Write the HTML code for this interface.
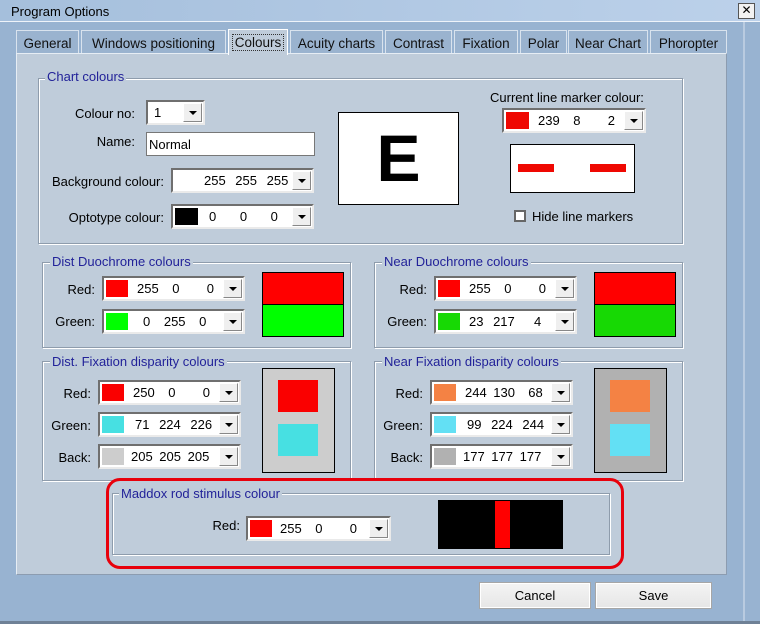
<!DOCTYPE html>
<html><head><meta charset="utf-8"><style>
*{margin:0;padding:0;box-sizing:border-box}
body{width:760px;height:624px;background:#98b3d1;font-family:"Liberation Sans",sans-serif;font-size:13px;color:#000;position:relative;overflow:hidden}
.a{position:absolute}
.title{left:0;top:0;width:760px;height:22px;background:linear-gradient(90deg,#a5bfdc,#bcd1ea);border-bottom:1px solid #eef3f9}
.tab{position:absolute;top:30px;height:24px;background:#9ab3cf;border:1px solid #d9e3ee;border-bottom:none;padding:5px 0 0;text-align:center;font-size:13.5px;color:#111}
.tab.act{top:29px;height:26px;background:#bfccda;z-index:2;border-color:#fff}
.tab.act span{border:1px dotted #333;padding:0 2px}
.panel{left:16px;top:53px;width:711px;height:522px;background:#bfccda;border:1px solid #e6edf4;border-right-color:#8c9cb0;border-bottom-color:#8c9cb0}
.grp{position:absolute;border:1px solid #8e9cac;box-shadow:1px 1px 0 #fff, inset 1px 1px 0 #fff}
.lg{position:absolute;background:#bfccda;color:#222299;padding:0 2px;font-size:13px;line-height:14px}
.lbl{position:absolute;font-size:13px;text-align:right;line-height:16px}
.cb{position:absolute;height:25px;background:#fff;border:2px solid;border-color:#6f6f6f #eaeaea #eaeaea #6f6f6f;font-size:13px}
.cb .sw{position:absolute;left:2px;top:2px;width:22px;height:17px}
.cb .bt{position:absolute;right:1px;top:1px;width:19px;height:19px;background:#efefef;border:1px solid;border-color:#fff #888 #888 #fff}
.cb .bt:after{content:"";position:absolute;left:5px;top:7px;border-left:4px solid transparent;border-right:4px solid transparent;border-top:4px solid #000}
.cb .v{position:absolute;top:4px;line-height:14px}
.btn{position:absolute;height:27px;background:linear-gradient(#f4f4f4,#e6e6e6);border:1px solid #a6a6a6;box-shadow:inset 0 0 0 1px #fff;text-align:center;line-height:25px;font-size:13px}
</style></head><body>
<div class="a title"><div class="a" style="left:11px;top:4px;font-size:13px">Program Options</div>
<div class="a" style="left:738px;top:3px;width:17px;height:16px;background:#f2f2f2;border:1px solid #555;font-size:12px;line-height:13px;text-align:center">✕</div></div>
<div class="a" style="left:743px;top:22px;width:2px;height:600px;background:#b9cbe0"></div>

<div class="tab" style="left:16px;width:63px">General</div>
<div class="tab" style="left:81px;width:145px">Windows positioning</div>
<div class="tab act" style="left:228px;width:60px"><span>Colours</span></div>
<div class="tab" style="left:290px;width:93px">Acuity charts</div>
<div class="tab" style="left:385px;width:67px">Contrast</div>
<div class="tab" style="left:454px;width:64px">Fixation</div>
<div class="tab" style="left:520px;width:47px">Polar</div>
<div class="tab" style="left:568px;width:80px">Near Chart</div>
<div class="tab" style="left:650px;width:77px">Phoropter</div>

<div class="a panel"></div>

<!-- Chart colours -->
<div class="grp" style="left:38px;top:78px;width:645px;height:166px"></div>
<div class="lg" style="left:45px;top:70px">Chart colours</div>
<div class="lbl" style="left:60px;top:106px;width:75px">Colour no:</div>
<div class="cb" style="left:146px;top:100px;width:59px"><span class="v" style="left:6px">1</span><div class="bt"></div></div>
<div class="lbl" style="left:60px;top:134px;width:75px">Name:</div>
<div class="a" style="left:146px;top:132px;width:169px;height:24px;background:#fff;border:1px solid #777;padding:4px 2px;font-size:13px">Normal</div>
<div class="lbl" style="left:44px;top:174px;width:120px">Background colour:</div>
<div class="cb" style="left:171px;top:168px;width:143px"><span class="v" style="left:31px;word-spacing:6px">255 255 255</span><div class="bt"></div></div>
<div class="lbl" style="left:44px;top:210px;width:120px">Optotype colour:</div>
<div class="cb" style="left:171px;top:204px;width:143px"><div class="sw" style="background:#000;width:23px"></div><span class="v" style="left:36px;word-spacing:20px">0 0 0</span><div class="bt"></div></div>
<div class="a" style="left:338px;top:112px;width:121px;height:93px;background:#fff;border:1px solid #000"></div>
<div class="a" style="left:338px;top:118px;width:121px;text-align:center;font-size:66px;font-weight:bold;line-height:80px">E</div>
<div class="a" style="left:490px;top:90px;font-size:13px">Current line marker colour:</div>
<div class="cb" style="left:502px;top:108px;width:144px"><div class="sw" style="background:#ef0802;width:23px"></div><span class="v" style="left:34px;word-spacing:10px">239 8 &nbsp;2</span><div class="bt"></div></div>
<div class="a" style="left:510px;top:144px;width:125px;height:49px;background:#fff;border:1px solid #000"></div>
<div class="a" style="left:518px;top:164px;width:36px;height:8px;background:#ef0802"></div>
<div class="a" style="left:590px;top:164px;width:36px;height:8px;background:#ef0802"></div>
<div class="a" style="left:514px;top:210px;width:12px;height:12px;background:#fff;border:2px solid #666"></div>
<div class="a" style="left:532px;top:209px">Hide line markers</div>

<!-- Dist duochrome -->
<div class="grp" style="left:42px;top:262px;width:309px;height:86px"></div>
<div class="lg" style="left:50px;top:255px">Dist Duochrome colours</div>
<div class="lbl" style="left:50px;top:282px;width:45px">Red:</div>
<div class="cb" style="left:102px;top:276px;width:143px"><div class="sw" style="background:#f00"></div><span class="v" style="left:33px;word-spacing:10px">255 0 &nbsp;0</span><div class="bt"></div></div>
<div class="lbl" style="left:40px;top:314px;width:55px">Green:</div>
<div class="cb" style="left:102px;top:309px;width:143px"><div class="sw" style="background:#0f0"></div><span class="v" style="left:39px;word-spacing:10px">0 255 0</span><div class="bt"></div></div>
<div class="a" style="left:262px;top:272px;width:82px;height:65px;border:1px solid #000;background:#0f0"><div style="height:32px;background:#f00;border-bottom:1px solid #000"></div></div>

<!-- Near duochrome -->
<div class="grp" style="left:374px;top:262px;width:309px;height:86px"></div>
<div class="lg" style="left:382px;top:255px">Near Duochrome colours</div>
<div class="lbl" style="left:380px;top:282px;width:47px">Red:</div>
<div class="cb" style="left:434px;top:276px;width:143px"><div class="sw" style="background:#f00"></div><span class="v" style="left:33px;word-spacing:10px">255 0 &nbsp;0</span><div class="bt"></div></div>
<div class="lbl" style="left:372px;top:314px;width:55px">Green:</div>
<div class="cb" style="left:434px;top:309px;width:143px"><div class="sw" style="background:#17d904"></div><span class="v" style="left:33px;word-spacing:6px">23 217 &nbsp;4</span><div class="bt"></div></div>
<div class="a" style="left:594px;top:272px;width:82px;height:65px;border:1px solid #000;background:#17d904"><div style="height:32px;background:#f00;border-bottom:1px solid #000"></div></div>

<!-- Dist fixation -->
<div class="grp" style="left:42px;top:361px;width:309px;height:120px"></div>
<div class="lg" style="left:50px;top:355px">Dist. Fixation disparity colours</div>
<div class="lbl" style="left:40px;top:386px;width:51px">Red:</div>
<div class="cb" style="left:98px;top:380px;width:143px"><div class="sw" style="background:#fa0000"></div><span class="v" style="left:33px;word-spacing:10px">250 0 &nbsp;0</span><div class="bt"></div></div>
<div class="lbl" style="left:36px;top:418px;width:55px">Green:</div>
<div class="cb" style="left:98px;top:412px;width:143px"><div class="sw" style="background:#47e0e2"></div><span class="v" style="left:35px;word-spacing:6px">71 224 226</span><div class="bt"></div></div>
<div class="lbl" style="left:40px;top:450px;width:51px">Back:</div>
<div class="cb" style="left:98px;top:444px;width:143px"><div class="sw" style="background:#cdcdcd"></div><span class="v" style="left:31px;word-spacing:3px">205 205 205</span><div class="bt"></div></div>
<div class="a" style="left:262px;top:368px;width:73px;height:105px;border:1px solid #000;background:#cdcdcd"></div>
<div class="a" style="left:278px;top:380px;width:40px;height:32px;background:#fa0000"></div>
<div class="a" style="left:278px;top:424px;width:40px;height:32px;background:#47e0e2"></div>

<!-- Near fixation -->
<div class="grp" style="left:374px;top:361px;width:309px;height:120px"></div>
<div class="lg" style="left:382px;top:355px">Near Fixation disparity colours</div>
<div class="lbl" style="left:372px;top:386px;width:51px">Red:</div>
<div class="cb" style="left:430px;top:380px;width:143px"><div class="sw" style="background:#f48244"></div><span class="v" style="left:33px;word-spacing:3px">244 130 &nbsp;68</span><div class="bt"></div></div>
<div class="lbl" style="left:368px;top:418px;width:55px">Green:</div>
<div class="cb" style="left:430px;top:412px;width:143px"><div class="sw" style="background:#63e0f4"></div><span class="v" style="left:35px;word-spacing:6px">99 224 244</span><div class="bt"></div></div>
<div class="lbl" style="left:372px;top:450px;width:51px">Back:</div>
<div class="cb" style="left:430px;top:444px;width:143px"><div class="sw" style="background:#b1b1b1"></div><span class="v" style="left:31px;word-spacing:3px">177 177 177</span><div class="bt"></div></div>
<div class="a" style="left:594px;top:368px;width:73px;height:105px;border:1px solid #000;background:#b1b1b1"></div>
<div class="a" style="left:610px;top:380px;width:40px;height:32px;background:#f48244"></div>
<div class="a" style="left:610px;top:424px;width:40px;height:32px;background:#63e0f4"></div>

<!-- Maddox -->
<div class="a" style="left:106px;top:478px;width:518px;height:91px;border:3px solid #e8000c;border-radius:14px;background:#bfccda"></div>
<div class="grp" style="left:112px;top:493px;width:498px;height:62px"></div>
<div class="lg" style="left:119px;top:487px">Maddox rod stimulus colour</div>
<div class="lbl" style="left:190px;top:518px;width:50px">Red:</div>
<div class="cb" style="left:246px;top:516px;width:145px"><div class="sw" style="background:#f00"></div><span class="v" style="left:32px;word-spacing:10px">255 0 &nbsp;0</span><div class="bt"></div></div>
<div class="a" style="left:438px;top:500px;width:125px;height:49px;background:#000"></div>
<div class="a" style="left:495px;top:501px;width:15px;height:47px;background:#f00"></div>

<div class="btn" style="left:479px;top:582px;width:112px">Cancel</div>
<div class="btn" style="left:595px;top:582px;width:117px">Save</div>
<div class="a" style="left:0;top:621px;width:760px;height:3px;background:#6f8196"></div>
</body></html>
